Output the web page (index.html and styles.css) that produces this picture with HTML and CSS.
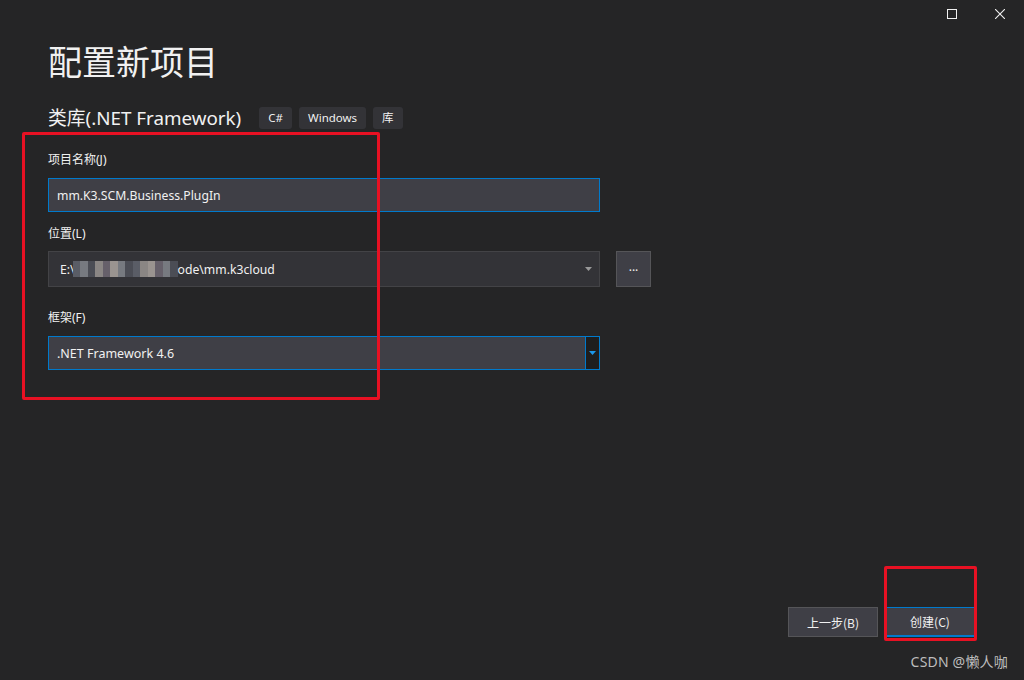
FILE: index.html
```html
<!DOCTYPE html>
<html lang="zh-CN">
<head>
<meta charset="utf-8">
<title>配置新项目</title>
<link rel="stylesheet" href="styles.css">
</head>
<body>
<div class="window">
  <div class="titlebar">
    <button class="winbtn" aria-label="最大化">
      <svg width="10" height="10" viewBox="0 0 10 10"><rect x="0.5" y="0.5" width="9" height="9" fill="none" stroke="#f1f1f1" stroke-width="1"/></svg>
    </button>
    <button class="winbtn" aria-label="关闭">
      <svg width="10" height="10" viewBox="0 0 10 10"><path d="M0 0L10 10M10 0L0 10" stroke="#f1f1f1" stroke-width="1.1"/></svg>
    </button>
  </div>
  <div class="content">
    <h1 class="title">配置新项目</h1>
    <div class="subtitle-row">
      <span class="subtitle">类库(.NET Framework)</span>
      <span class="tag">C#</span>
      <span class="tag">Windows</span>
      <span class="tag">库</span>
    </div>
    <div class="form">
      <label class="label label-name">项目名称(J)</label>
      <div class="field field-focus field-name">mm.K3.SCM.Business.PlugIn</div>

      <label class="label label-loc">位置(L)</label>
      <div class="loc-row">
        <div class="field field-combo">
          <span class="combo-text">E:\<span class="mosaic"><span class="m m1"></span><span class="m m2"></span><span class="m m3"></span><span class="m m4"></span><span class="m m5"></span><span class="m m6"></span><span class="m m2"></span><span class="m m3"></span><span class="m m1"></span><span class="m m4"></span><span class="m m6"></span><span class="m m5"></span><span class="m m2"></span><span class="m m3"></span></span>ode\mm.k3cloud</span>
          <svg class="combo-arrow" width="7" height="4" viewBox="0 0 7 4"><path d="M0 0H7L3.5 4Z" fill="#999"/></svg>
        </div>
        <button class="browse">...</button>
      </div>

      <label class="label label-fw">框架(F)</label>
      <div class="field field-focus field-select">
        <span class="select-text">.NET Framework 4.6</span>
        <span class="select-drop"><svg width="7" height="4" viewBox="0 0 7 4"><path d="M0 0H7L3.5 4Z" fill="#1c97ea"/></svg></span>
      </div>
    </div>
    <div class="footer">
      <button class="btn">上一步(B)</button>
      <button class="btn btn-primary">创建(C)</button>
    </div>
  </div>
  <div class="mark mark-form"></div>
  <div class="mark mark-create"></div>
  <div class="watermark">CSDN @懒人咖</div>
</div>
</body>
</html>
```

FILE: styles.css
```css
* { box-sizing: border-box; }
html, body { margin: 0; padding: 0; }
body {
  background: #252526;
  font-family: "Noto Sans", "Noto Sans CJK SC", sans-serif;
  color: #f1f1f1;
}
.window {
  position: relative;
  width: 1024px;
  height: 680px;
  overflow: hidden;
  display: flex;
  flex-direction: column;
  background: #252526;
}
.titlebar {
  display: flex;
  justify-content: flex-end;
  height: 32px;
  flex: none;
}
.winbtn {
  width: 48px;
  height: 32px;
  border: 0;
  background: transparent;
  padding: 0;
  display: flex;
  align-items: center;
  justify-content: center;
  margin-top: -2px;
}
.content {
  flex: 1;
  display: flex;
  flex-direction: column;
  padding: 0 50px 43px 48px;
}
.title {
  margin: 7px 0 0 0;
  font-family: "Noto Sans CJK SC", sans-serif;
  font-weight: 400;
  font-size: 34px;
  line-height: 44px;
  color: #f1f1f1;
}
.subtitle-row {
  display: flex;
  align-items: center;
  margin-top: 23px;
  height: 24px;
}
.subtitle {
  font-size: 18.8px;
  line-height: 24px;
  color: #f1f1f1;
  margin-right: 18px;
}
.tag {
  background: #333337;
  border-radius: 3px;
  height: 22px;
  padding: 0 9px;
  font-size: 11.5px;
  line-height: 22px;
  color: #f1f1f1;
  margin-right: 7px;
}
.form {
  display: flex;
  flex-direction: column;
  width: 603px;
}
.label {
  font-size: 12px;
  line-height: 16px;
  color: #f1f1f1;
}
.label-name { margin-top: 22px; }
.label-loc { margin-top: 14px; }
.label-fw { margin-top: 23px; }
.field {
  height: 34px;
  width: 552px;
  font-size: 12.2px;
  color: #f1f1f1;
  display: flex;
  align-items: center;
}
.field-focus {
  border: 1px solid #007acc;
  background: #3f3f46;
}
.field-name {
  margin-top: 10px;
  padding-left: 8px;
}
.loc-row {
  display: flex;
  align-items: center;
  margin-top: 9px;
  gap: 16px;
  width: 620px;
}
.field-combo {
  height: 36px;
  background: #333337;
  border: 1px solid #434346;
  padding-left: 11px;
  padding-right: 4px;
  justify-content: space-between;
}
.combo-text { display: flex; align-items: center; white-space: nowrap; }
.mosaic { display: inline-flex; height: 16px; margin: 0 0 0 -2px; }
.m { display: inline-block; width: 7.5px; height: 16px; }
.m1 { background: #5a5d66; }
.m2 { background: #777a80; }
.m3 { background: #4b4d55; }
.m4 { background: #8a8684; }
.m5 { background: #66606a; }
.m6 { background: #9a9490; }
.combo-arrow { margin-right: 3px; }
.browse {
  width: 35px;
  height: 36px;
  border: 1px solid #555558;
  background: #3f3f46;
  color: #f1f1f1;
  font-family: "Noto Sans", sans-serif;
  font-size: 12px;
  padding: 0 0 4px 0;
  line-height: 1;
}
.field-select {
  margin-top: 10px;
  padding: 0;
  justify-content: space-between;
  font-size: 12.5px;
}
.select-text { padding-left: 8px; }
.select-drop {
  width: 14px;
  height: 100%;
  background: #1e1e1e;
  border-left: 1px solid #007acc;
  display: flex;
  align-items: center;
  justify-content: center;
}
.footer {
  margin-top: auto;
  display: flex;
  justify-content: flex-end;
  gap: 8px;
}
.btn {
  height: 30px;
  width: 90px;
  border: 1px solid #555558;
  background: #3f3f46;
  color: #f1f1f1;
  font-family: "Noto Sans CJK SC", sans-serif;
  font-size: 12px;
  padding: 0;
}
.btn-primary {
  width: 88px;
  border: 0;
  border-top: 1px solid #007acc;
  border-bottom: 2px solid #007acc;
}
.mark {
  position: absolute;
  border: 3px solid #e81123;
  border-radius: 2px;
}
.mark-form {
  left: 22px;
  top: 132px;
  width: 358px;
  height: 268px;
}
.mark-create {
  left: 884px;
  top: 566px;
  width: 93px;
  height: 75px;
}
.watermark {
  position: absolute;
  right: 16px;
  bottom: 9px;
  font-family: "Noto Sans", "Noto Sans CJK SC", sans-serif;
  font-size: 14px;
  color: #bdbdbd;
  letter-spacing: 0.2px;
}
```
